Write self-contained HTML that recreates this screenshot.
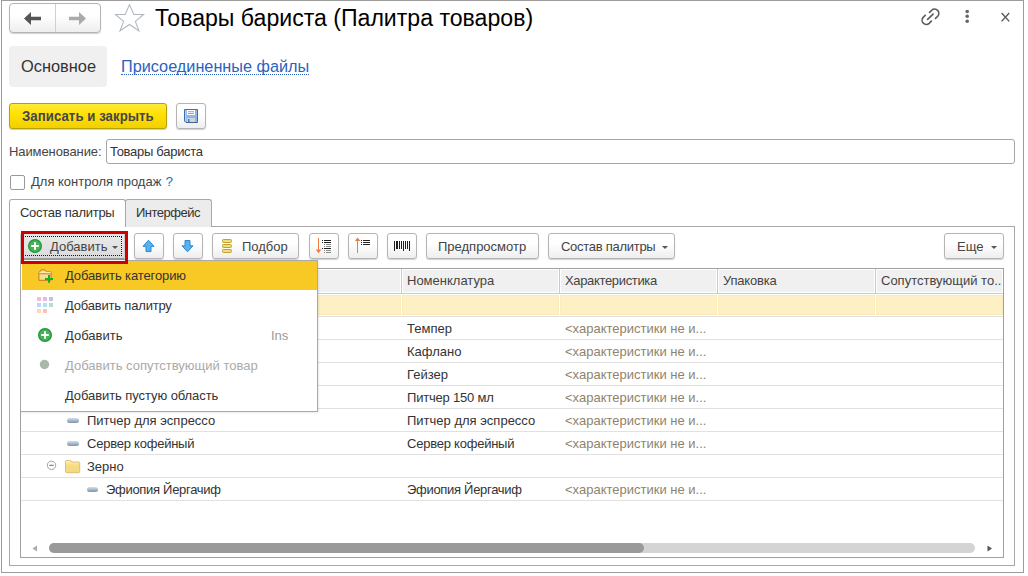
<!DOCTYPE html>
<html><head><meta charset="utf-8">
<style>
*{box-sizing:border-box;margin:0;padding:0}
html,body{width:1028px;height:576px;overflow:hidden;background:#fff;font-family:"Liberation Sans",sans-serif;font-size:13px;color:#333}
.a{position:absolute}
.win{left:1px;top:0;width:1023px;height:573px;border:1px solid #9c9c9c}
.btn{position:absolute;border:1px solid #b4b4b4;border-radius:3px;background:linear-gradient(#fff 40%,#eeeeee);box-shadow:0 1px 1px rgba(0,0,0,.18)}
.t{position:absolute;white-space:nowrap;line-height:15px;font-size:13px;}
.pill{width:12px;height:5px;border-radius:2.5px;background:linear-gradient(#d4e0ea,#9fb2c4 60%,#7f95aa)}
.hl{position:absolute;height:1px;background:#e1e1e1}
</style></head><body>
<div class="a win"></div>

<!-- nav buttons -->
<div class="btn" style="left:9px;top:3px;width:92px;height:30px;border-radius:4px"></div>
<div class="a" style="left:55px;top:4px;width:1px;height:28px;background:#d0d0d0"></div>
<svg class="a" style="left:20px;top:8px" width="80" height="22" viewBox="0 0 80 22">
  <path d="M4 10.5 L11 4 L11 8.7 L21 8.7 L21 12.3 L11 12.3 L11 17 Z" fill="#555"/>
  <path d="M66 10.5 L59 4 L59 8.7 L49 8.7 L49 12.3 L59 12.3 L59 17 Z" fill="#aaa"/>
</svg>
<!-- star -->
<svg class="a" style="left:114px;top:4px" width="32" height="30" viewBox="0 0 32 30">
  <path d="M15.5 0.6 L19.8 10.4 L29.6 10.4 L21.4 17.4 L25 27 L15.5 20.5 L6 27 L9.6 17.4 L1.4 10.4 L11.2 10.4 Z" fill="none" stroke="#b0b7bf" stroke-width="1.05" stroke-linejoin="miter"/>
</svg>
<div class="t" style="left:155px;top:5px;font-size:23.1px;line-height:26px;color:#000;transform:none">Товары бариста (Палитра товаров)</div>

<!-- top right icons -->
<svg class="a" style="left:915px;top:4px" width="30" height="26" viewBox="0 0 30 26">
  <g fill="none" stroke="#5a5a5a" stroke-width="1.6" stroke-linecap="round">
    <path d="M14.5 8.4 L16.75 6.23 A4.25 4.25 0 0 1 22.75 12.23 L20.5 14.4"/>
    <path d="M10.3 11.2 L8.15 13.35 A4.25 4.25 0 0 0 14.15 19.35 L16.4 17.1"/>
    <path d="M12.6 15.4 L18.1 10.1"/>
  </g>
</svg>
<svg class="a" style="left:960px;top:8px" width="14" height="18" viewBox="0 0 14 18">
  <circle cx="7.2" cy="3.5" r="1.8" fill="#666"/><circle cx="7.2" cy="8.2" r="1.8" fill="#666"/><circle cx="7.2" cy="13.2" r="1.8" fill="#666"/>
</svg>
<svg class="a" style="left:998px;top:10px" width="14" height="14" viewBox="0 0 14 14">
  <path d="M3.6 3 L11.2 11.4 M11.2 3 L3.6 11.4" stroke="#5a5a5a" stroke-width="1.4"/>
</svg>

<!-- tabs Основное / Присоединенные -->
<div class="a" style="left:9px;top:46px;width:98px;height:41px;background:#f0f0f0;border-radius:4px"></div>
<div class="t" style="left:21px;top:56.6px;font-size:16.4px;line-height:18px;color:#333;transform:none">Основное</div>
<div class="t" style="left:121px;top:57.6px;font-size:16.25px;line-height:16px;color:#2b62c0;border-bottom:1px dotted #2b62c0;;transform:none">Присоединенные файлы</div>

<!-- command bar -->
<div class="a" style="left:9px;top:103px;width:158px;height:26px;border:1px solid #b8a000;border-radius:3px;background:linear-gradient(#ffea3a,#ffe100 45%,#f2d000);box-shadow:0 1px 1px rgba(0,0,0,.2)"></div>
<div class="t" style="left:22px;top:108.5px;font-weight:bold;font-size:13.2px;color:#45454c;transform:scaleY(1.08);transform-origin:0 12px;letter-spacing:0.06px">Записать и закрыть</div>
<div class="btn" style="left:176px;top:103px;width:30px;height:26px"></div>
<svg class="a" style="left:184px;top:109px" width="14" height="14" viewBox="0 0 14 14">
  <path d="M0.5 0.5 H13.5 V13.5 H2 L0.5 12 Z" fill="#8fb6e6" stroke="#3f6cab" stroke-width="1"/>
  <rect x="1" y="1" width="1.2" height="11" fill="#b4d0f2"/>
  <rect x="3" y="1" width="8" height="5" fill="#fff"/>
  <rect x="4" y="2.3" width="6" height="0.9" fill="#7a9cc8"/><rect x="4" y="4.1" width="6" height="0.9" fill="#7a9cc8"/>
  <rect x="3" y="9" width="8" height="4" fill="#cdd6d0"/><rect x="4" y="10" width="1.5" height="3" fill="#4a78b8"/>
  <rect x="2" y="13" width="11" height="0.6" fill="#3a5f96"/>
</svg>

<!-- Наименование -->
<div class="t" style="left:9px;top:144px;color:#444;letter-spacing:-0.1px">Наименование:</div>
<div class="a" style="left:106px;top:139px;width:909px;height:25px;border:1px solid #a6a6a6;border-radius:3px;background:#fff"></div>
<div class="t" style="left:110px;top:144px;color:#333;letter-spacing:-0.28px">Товары бариста</div>

<!-- checkbox -->
<div class="a" style="left:10px;top:175px;width:15px;height:15px;border:1px solid #999;border-radius:2px;background:#fff"></div>
<div class="t" style="left:31px;top:174px;color:#444">Для контроля продаж</div>
<div class="t" style="left:165.5px;top:174px;color:#2270b8;font-size:13.5px;transform:none">?</div>

<!-- tabs panel -->
<div class="a" style="left:9px;top:226px;width:1006px;height:340px;border:1px solid #a8a8a8"></div>
<div class="a" style="left:125px;top:199px;width:87px;height:28px;border:1px solid #a8a8a8;border-bottom:none;border-radius:3px 3px 0 0;background:#ececec"></div>
<div class="a" style="left:9px;top:199px;width:117px;height:28px;border:1px solid #a8a8a8;border-bottom:none;border-radius:3px 3px 0 0;background:#fff"></div>
<div class="t" style="left:20px;top:205px;color:#333;letter-spacing:-0.28px">Состав палитры</div>
<div class="t" style="left:136px;top:205px;color:#333;letter-spacing:-0.5px">Интерфейс</div>

<!-- toolbar -->
<div class="a" style="left:24px;top:234px;width:101px;height:26px;background:linear-gradient(#dfe3e3,#e8e8e8 12%,#e2e2e2 60%,#d9d9d9);border-bottom:2px solid #999;border-right:1px solid #cfcfcf"></div>
<div class="a" style="left:25px;top:236px;width:97px;height:20px;border:1px dotted #1a1a1a;border-left:none"></div>
<svg class="a" style="left:28px;top:239px" width="14" height="14" viewBox="0 0 14 14">
  <circle cx="7" cy="7" r="6.4" fill="#47b257" stroke="#23963a" stroke-width="1.2"/>
  <path d="M7 3.2 V10.8 M3.2 7 H10.8" stroke="#fff" stroke-width="2"/>
</svg>
<div class="t" style="left:50px;top:239px;color:#444">Добавить</div>
<svg class="a" style="left:111px;top:245px" width="8" height="5" viewBox="0 0 8 5"><path d="M1 1 H7 L4 4 Z" fill="#555"/></svg>

<div class="btn" style="left:134px;top:233px;width:30px;height:26px"></div>
<svg class="a" style="left:142px;top:239px" width="13" height="14" viewBox="0 0 13 14">
  <path d="M6.5 1.2 L12 7.3 H9 V12.6 H4 V7.3 H1 Z" fill="#56b3ef" stroke="#2e86cc" stroke-width="1" stroke-linejoin="miter"/>
</svg>
<div class="btn" style="left:173px;top:233px;width:30px;height:26px"></div>
<svg class="a" style="left:181px;top:239px" width="13" height="14" viewBox="0 0 13 14">
  <path d="M6.5 12.8 L12 6.8 H9 V1.5 H4 V6.8 H1 Z" fill="#56b3ef" stroke="#2e86cc" stroke-width="1" stroke-linejoin="miter"/>
</svg>
<div class="btn" style="left:212px;top:233px;width:87px;height:26px"></div>
<svg class="a" style="left:222px;top:239px" width="10" height="14" viewBox="0 0 10 14">
  <g fill="#ead468" stroke="#c2a234" stroke-width="1"><rect x="0.5" y="0.5" width="9" height="3" rx="0.9"/><rect x="0.5" y="5.5" width="9" height="3" rx="0.9"/><rect x="0.5" y="10.5" width="9" height="3" rx="0.9"/></g>
  <g fill="#f6e89a"><rect x="2" y="1.6" width="6" height="0.9"/><rect x="2" y="6.6" width="6" height="0.9"/><rect x="2" y="11.6" width="6" height="0.9"/></g>
</svg>
<div class="t" style="left:242px;top:239px;color:#444">Подбор</div>
<div class="btn" style="left:309px;top:233px;width:30px;height:26px"></div>
<svg class="a" style="left:312px;top:235px" width="24" height="21" viewBox="0 0 24 21" shape-rendering="crispEdges">
  <rect x="6" y="3" width="1.2" height="13" fill="#f07c3c"/><path d="M3.8 14.6 H9.4 L6.6 18.2 Z" fill="#f07c3c" shape-rendering="geometricPrecision"/>
  <g fill="#222"><rect x="10" y="5" width="1" height="1"/><rect x="12" y="5" width="7" height="1"/><rect x="10" y="7" width="1" height="1"/><rect x="12" y="7" width="7" height="1"/><rect x="10" y="13" width="1" height="1"/><rect x="12" y="13" width="7" height="1"/></g>
  <g fill="#8a8a8a"><rect x="12" y="9" width="1" height="1"/><rect x="14" y="9" width="5" height="1"/><rect x="12" y="11" width="1" height="1"/><rect x="14" y="11" width="5" height="1"/><rect x="12" y="15" width="1" height="1"/><rect x="14" y="15" width="5" height="1"/><rect x="12" y="17" width="1" height="1"/><rect x="14" y="17" width="5" height="1"/></g>
</svg>
<div class="btn" style="left:348px;top:233px;width:30px;height:26px"></div>
<svg class="a" style="left:351px;top:235px" width="24" height="21" viewBox="0 0 24 21" shape-rendering="crispEdges">
  <rect x="6" y="5" width="1.2" height="13" fill="#f07c3c"/><path d="M3.8 6 H9.4 L6.6 2.6 Z" fill="#f07c3c" shape-rendering="geometricPrecision"/>
  <g fill="#222"><rect x="10" y="5" width="1" height="1"/><rect x="12" y="5" width="7" height="1"/><rect x="10" y="7" width="1" height="1"/><rect x="12" y="7" width="7" height="1"/><rect x="10" y="9" width="1" height="1"/><rect x="12" y="9" width="7" height="1"/></g>
</svg>
<div class="btn" style="left:387px;top:233px;width:30px;height:26px"></div>
<svg class="a" style="left:390px;top:235px" width="24" height="21" viewBox="0 0 24 21" shape-rendering="crispEdges">
  <g fill="#1e1e1e"><rect x="4" y="6" width="1" height="10"/><rect x="6" y="6" width="2" height="8"/><rect x="9" y="6" width="1" height="8"/><rect x="11" y="6" width="1" height="8"/><rect x="13" y="6" width="1" height="10"/><rect x="15" y="6" width="1" height="8"/><rect x="17" y="6" width="1" height="8"/><rect x="19" y="6" width="1" height="10"/></g>
</svg>
<div class="btn" style="left:426px;top:233px;width:113px;height:26px"></div>
<div class="t" style="left:438px;top:239px;color:#444">Предпросмотр</div>
<div class="btn" style="left:548px;top:233px;width:127px;height:26px"></div>
<div class="t" style="left:561px;top:239px;color:#444;letter-spacing:-0.28px">Состав палитры</div>
<svg class="a" style="left:661px;top:245px" width="8" height="5" viewBox="0 0 8 5"><path d="M1 1 H7 L4 4 Z" fill="#555"/></svg>
<div class="btn" style="left:944px;top:233px;width:60px;height:26px"></div>
<div class="t" style="left:957px;top:239px;color:#444">Еще</div>
<svg class="a" style="left:990px;top:245px" width="8" height="5" viewBox="0 0 8 5"><path d="M1 1 H7 L4 4 Z" fill="#555"/></svg>

<!-- table -->
<div class="a" style="left:20px;top:268px;width:984px;height:290px;border:1px solid #a0a0a0"></div>
<div class="a" style="left:22px;top:270px;width:378px;height:22px;background:#f0f0f0"></div>
<div class="a" style="left:403px;top:270px;width:155px;height:22px;background:#f0f0f0"></div>
<div class="a" style="left:561px;top:270px;width:155px;height:22px;background:#f0f0f0"></div>
<div class="a" style="left:719px;top:270px;width:155px;height:22px;background:#f0f0f0"></div>
<div class="a" style="left:877px;top:270px;width:125px;height:22px;background:#f0f0f0"></div>
<div class="a" style="left:401px;top:269px;width:1px;height:24px;background:#c9c9c9"></div>
<div class="a" style="left:559px;top:269px;width:1px;height:24px;background:#c9c9c9"></div>
<div class="a" style="left:717px;top:269px;width:1px;height:24px;background:#c9c9c9"></div>
<div class="a" style="left:875px;top:269px;width:1px;height:24px;background:#c9c9c9"></div>
<div class="a" style="left:21px;top:293px;width:982px;height:1px;background:#c9c9c9"></div>
<div class="a" style="left:21px;top:295px;width:380px;height:20px;background:#fdf0c5;box-shadow:inset 0 0 0 1px #fcebb8"></div>
<div class="a" style="left:402px;top:295px;width:157px;height:20px;background:#fdf0c5;box-shadow:inset 0 0 0 1px #fcebb8"></div>
<div class="a" style="left:560px;top:295px;width:157px;height:20px;background:#fdf0c5;box-shadow:inset 0 0 0 1px #fcebb8"></div>
<div class="a" style="left:718px;top:295px;width:157px;height:20px;background:#fdf0c5;box-shadow:inset 0 0 0 1px #fcebb8"></div>
<div class="a" style="left:876px;top:295px;width:127px;height:20px;background:#fdf0c5;box-shadow:inset 0 0 0 1px #fcebb8"></div>
<div class="t" style="left:407px;top:273px;color:#444">Номенклатура</div>
<div class="t" style="left:565px;top:273px;color:#444;letter-spacing:-0.34px">Характеристика</div>
<div class="t" style="left:723px;top:273px;color:#444;letter-spacing:-0.2px">Упаковка</div>
<div class="t" style="left:881px;top:273px;color:#444">Сопутствующий то..</div>

<div class="hl" style="left:21px;top:316px;width:982px"></div>
<div class="hl" style="left:21px;top:339px;width:982px"></div>
<div class="hl" style="left:21px;top:362px;width:982px"></div>
<div class="hl" style="left:21px;top:385px;width:982px"></div>
<div class="hl" style="left:21px;top:408px;width:982px"></div>
<div class="hl" style="left:21px;top:431px;width:982px"></div>
<div class="hl" style="left:21px;top:454px;width:982px"></div>
<div class="hl" style="left:21px;top:477px;width:982px"></div>
<div class="hl" style="left:21px;top:500px;width:982px"></div>

<div class="t" style="left:407px;top:321px;color:#333">Темпер</div>
<div class="t" style="left:407px;top:344px;color:#333">Кафлано</div>
<div class="t" style="left:407px;top:367px;color:#333">Гейзер</div>
<div class="t" style="left:407px;top:390px;color:#333;letter-spacing:-0.2px">Питчер 150 мл</div>
<div class="t" style="left:407px;top:413px;color:#333">Питчер для эспрессо</div>
<div class="t" style="left:407px;top:436px;color:#333;letter-spacing:-0.23px">Сервер кофейный</div>
<div class="t" style="left:407px;top:482px;color:#333;letter-spacing:-0.3px">Эфиопия Йергачиф</div>
<div class="t" style="left:565px;top:321px;color:#8f836b">&lt;характеристики не и...</div>
<div class="t" style="left:565px;top:344px;color:#8f836b">&lt;характеристики не и...</div>
<div class="t" style="left:565px;top:367px;color:#8f836b">&lt;характеристики не и...</div>
<div class="t" style="left:565px;top:390px;color:#8f836b">&lt;характеристики не и...</div>
<div class="t" style="left:565px;top:413px;color:#8f836b">&lt;характеристики не и...</div>
<div class="t" style="left:565px;top:436px;color:#8f836b">&lt;характеристики не и...</div>
<div class="t" style="left:565px;top:482px;color:#8f836b">&lt;характеристики не и...</div>

<div class="a pill" style="left:67px;top:418px"></div>
<div class="t" style="left:87px;top:413px;color:#333">Питчер для эспрессо</div>
<div class="a pill" style="left:67px;top:441px"></div>
<div class="t" style="left:87px;top:436px;color:#333;letter-spacing:-0.23px">Сервер кофейный</div>
<svg class="a" style="left:46px;top:460px" width="12" height="12" viewBox="0 0 12 12"><circle cx="5.5" cy="5.3" r="4.2" fill="none" stroke="#8c8c8c" stroke-width="0.8"/><path d="M3.3 5.3 H7.7" stroke="#555" stroke-width="0.9"/></svg>
<svg class="a" style="left:64px;top:459px" width="17" height="15" viewBox="0 0 17 15">
  <defs><linearGradient id="fg" x1="0" y1="0" x2="0" y2="1"><stop offset="0" stop-color="#fdf3c4"/><stop offset="0.45" stop-color="#f6dc78"/><stop offset="1" stop-color="#f3d98a"/></linearGradient></defs>
  <path d="M1.5 2.5 Q1.5 1.3 2.7 1.3 H6.6 L7.8 3 H14.6 Q15.7 3 15.7 4.1 V12.6 Q15.7 13.7 14.6 13.7 H2.6 Q1.5 13.7 1.5 12.6 Z" fill="url(#fg)" stroke="#dcb868" stroke-width="0.9"/>
</svg>
<div class="t" style="left:87px;top:459px;color:#333">Зерно</div>
<div class="a pill" style="left:87px;top:487px;width:11px"></div>
<div class="t" style="left:106px;top:482px;color:#333;letter-spacing:-0.3px">Эфиопия Йергачиф</div>

<!-- scrollbar -->
<div class="a" style="left:49px;top:543px;width:926px;height:10px;border-radius:5px;background:#d4d4d4"></div>
<div class="a" style="left:49px;top:543px;width:595px;height:10px;border-radius:5px;background:#9a9a9a"></div>
<svg class="a" style="left:32px;top:545px" width="6" height="7" viewBox="0 0 6 7"><path d="M5 0.5 V6.5 L0.5 3.5 Z" fill="#aaa"/></svg>
<svg class="a" style="left:987px;top:545px" width="6" height="7" viewBox="0 0 6 7"><path d="M0.5 0.5 V6.5 L5 3.5 Z" fill="#555"/></svg>

<!-- dropdown menu -->
<div class="a" style="left:20px;top:260px;width:298px;height:152px;border:1px solid #a8a8a8;background:#fff;box-shadow:1px 1px 2px rgba(0,0,0,.08)"></div>
<div class="a" style="left:20px;top:234px;width:1px;height:26px;background:#c8c8c8"></div>
<div class="a" style="left:22px;top:261px;width:295px;height:29px;background:#f8c924"></div>
<svg class="a" style="left:34px;top:264px" width="24" height="24" viewBox="0 0 24 24">
  <path d="M4.9 16.3 V8.3 Q4.9 7.8 5.4 7.8 H5.9 L7.2 5.8 H11.1 L12.4 7.8 H16.6 Q17.1 7.8 17.1 8.3 V16.3 Z" fill="#f7dd8c" stroke="#c27c1c" stroke-width="1"/>
  <path d="M5.4 7.9 H16.6 V9.4 H5.4 Z" fill="#fbeaa8"/>
  <path d="M5.2 9.8 H16.8" stroke="#c27c1c" stroke-width="0.9"/>
  <rect x="14" y="11" width="2" height="7.8" fill="#14ae28"/><rect x="11" y="14" width="8" height="2" fill="#14ae28"/>
</svg>
<div class="t" style="left:65px;top:268px;color:#333;letter-spacing:-0.11px">Добавить категорию</div>
<svg class="a" style="left:37px;top:297px" width="16" height="16" viewBox="0 0 16 16">
  <rect x="0" y="0" width="4" height="4" fill="#f6bcd6"/><rect x="6" y="0" width="4" height="4" fill="#dcbce8"/><rect x="12" y="0" width="4" height="4" fill="#bcc4ea"/>
  <rect x="0" y="6" width="4" height="4" fill="#bcd8f6"/><rect x="6" y="6" width="4" height="4" fill="#b4e2ec"/><rect x="12" y="6" width="4" height="4" fill="#b4ddd4"/>
  <rect x="0" y="12" width="4" height="4" fill="#fdd9b4"/><rect x="6" y="12" width="4" height="4" fill="#f8c4b8"/>
</svg>
<div class="t" style="left:65px;top:298px;color:#333;letter-spacing:-0.19px">Добавить палитру</div>
<svg class="a" style="left:38px;top:328px" width="14" height="14" viewBox="0 0 14 14">
  <circle cx="7" cy="7" r="6.4" fill="#47b257" stroke="#23963a" stroke-width="1.2"/>
  <path d="M7 3.2 V10.8 M3.2 7 H10.8" stroke="#fff" stroke-width="2"/>
</svg>
<div class="t" style="left:65px;top:328px;color:#333">Добавить</div>
<div class="t" style="left:271px;top:328px;color:#999">Ins</div>
<svg class="a" style="left:39px;top:359px" width="11" height="11" viewBox="0 0 11 11"><circle cx="5.5" cy="5.5" r="4.7" fill="#a9b9a9"/></svg>
<div class="t" style="left:65px;top:358px;color:#aaa">Добавить сопутствующий товар</div>
<div class="t" style="left:65px;top:388px;color:#333;letter-spacing:-0.08px">Добавить пустую область</div>
<div class="a" style="left:24px;top:260px;width:101px;height:1px;background:#eef6f6"></div>
<div class="a" style="left:21px;top:231px;width:107px;height:33px;border:3px solid #cc0000"></div>
</body></html>
